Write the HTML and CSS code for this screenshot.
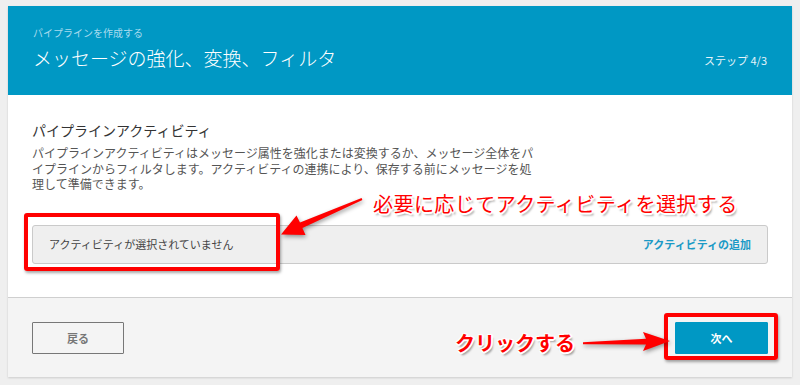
FILE: index.html
```html
<!DOCTYPE html>
<html lang="ja">
<head>
    <meta charset="UTF-8">
    <title>パイプラインを作成する</title>
    <link rel="stylesheet" href="styles.css">
</head>
<body>
    <div id="page">
        <div class="wizard">
            <div class="head">
                <div class="titles">
                    <p class="sub">パイプラインを作成する</p>
                    <h1>メッセージの強化、変換、フィルタ</h1>
                </div>
                <span class="step">ステップ 4/3</span>
            </div>
            <div class="main">
                <h2>パイプラインアクティビティ</h2>
                <p class="desc">パイプラインアクティビティはメッセージ属性を強化または変換するか、メッセージ全体をパイプラインからフィルタします。アクティビティの連携により、保存する前にメッセージを処理して準備できます。</p>
                <div class="activity">
                    <span>アクティビティが選択されていません</span>
                    <a href="#">アクティビティの追加</a>
                </div>
            </div>
            <div class="foot">
                <button class="btn back">戻る</button>
                <button class="btn next">次へ</button>
            </div>
        </div>

        <!-- 注釈 -->
        <div class="mark mark1"></div>
        <div class="mark mark2"></div>
        <svg class="arrows" width="800" height="385" viewBox="0 0 800 385">
            <polygon points="361.6,198.1 300,222.5 296.5,215.5 281,234.5 305.5,235 302.4,228.1 362.4,199.9"/>
            <polygon points="583,342.3 646,338.8 643,332 670,341 643,351 646,344.6 583,344.2"/>
        </svg>
        <span class="note note1">必要に応じてアクティビティを選択する</span>
        <span class="note note2">クリックする</span>
    </div>
</body>
</html>
```

FILE: styles.css
```css
*{
    padding: 0;
    margin: 0;
    box-sizing: border-box;
}
body{
    background: #efefef;
    font-family: "Noto Sans CJK JP", "Noto Sans", sans-serif;
    color: #333;
}
#page{
    position: relative;
    width: 800px;
    height: 385px;
    padding: 6px 8px 0;
}
.wizard{
    background: #fff;
    box-shadow: 0 1px 2px rgba(0,0,0,.15);
}
.head{
    display: flex;
    justify-content: space-between;
    align-items: flex-end;
    height: 89px;
    padding: 20px 25px 0;
    background: #0098c4;
}
.head .sub{
    font-size: 10px;
    line-height: 14px;
    color: #a8dbee;
}
.head h1{
    margin-top: 4px;
    font-size: 19px;
    line-height: 28px;
    font-weight: 300;
    color: #fff;
}
.head .titles{
    align-self: flex-start;
}
.head .step{
    margin-bottom: 27px;
    font-size: 11px;
    line-height: 16px;
    color: #e6f4fa;
}
.main{
    padding: 25px 24px 33px;
}
.main h2{
    font-size: 14px;
    line-height: 20px;
    font-weight: normal;
    color: #333;
}
.main .desc{
    width: 506px;
    margin-top: 5px;
    font-size: 12px;
    line-height: 15.5px;
    color: #555;
}
.activity{
    display: flex;
    justify-content: space-between;
    align-items: center;
    height: 39px;
    margin-top: 33px;
    padding: 0 16px;
    background: #efefef;
    border: 1px solid #cacaca;
    border-radius: 3px;
    font-size: 11px;
    color: #444;
}
.activity a{
    color: #1b9ac6;
    font-weight: bold;
    text-decoration: none;
}
.foot{
    display: flex;
    justify-content: space-between;
    padding: 24px 24px 23px;
    background: #f4f4f4;
    border-top: 1px solid #cfcfcf;
}
.btn{
    height: 32px;
    font-family: inherit;
    font-size: 11px;
    font-weight: bold;
    border-radius: 1px;
    cursor: pointer;
}
.back{
    width: 92px;
    background: transparent;
    border: 1px solid #777;
    color: #777;
}
.next{
    width: 93px;
    background: #0098c4;
    border: 1px solid #0098c4;
    color: #fff;
}
.mark{
    position: absolute;
    border: 4px solid #f00;
    border-radius: 3px;
    box-shadow: 1px 2px 3px rgba(0,0,0,.35);
}
.mark1{
    left: 24px;
    top: 213px;
    width: 256px;
    height: 58px;
}
.mark2{
    left: 664px;
    top: 313px;
    width: 114px;
    height: 47px;
}
.arrows{
    position: absolute;
    left: 0;
    top: 0;
    fill: #f00;
    filter: drop-shadow(1px 2px 2px rgba(0,0,0,.4));
}
.note{
    position: absolute;
    color: #f00;
    font-size: 20px;
    line-height: 24px;
    white-space: nowrap;
    text-shadow: -1px -1px 0 #fff, 1px -1px 0 #fff, -1px 1px 0 #fff, 1px 1px 0 #fff,
        0 2px 0 #fff, 2px 0 0 #fff, 2px 3px 2px rgba(0,0,0,.35);
}
.note1{
    left: 373px;
    top: 192px;
    letter-spacing: 0.45px;
}
.note2{
    left: 455px;
    top: 331px;
    font-weight: bold;
}
```
